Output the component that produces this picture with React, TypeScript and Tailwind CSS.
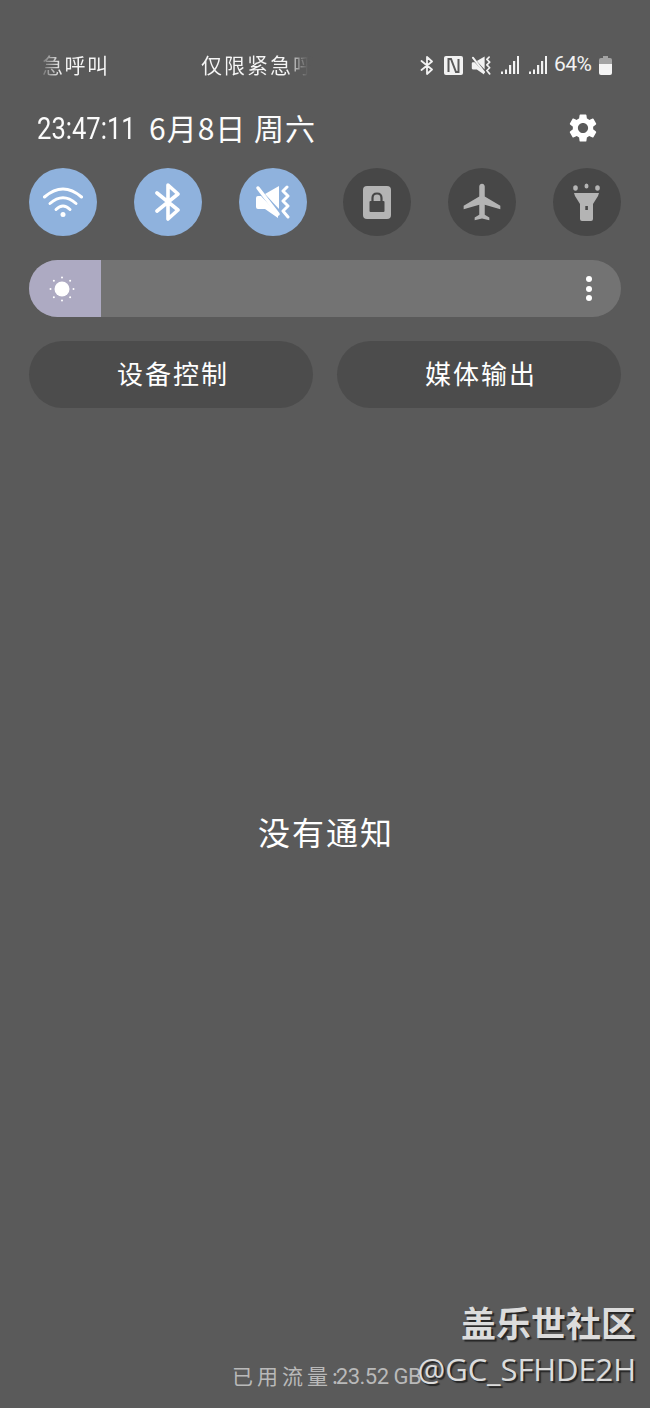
import { MdAirplanemodeActive, MdSettings } from 'react-icons/md';

const CJK = "font-['Noto_Sans_CJK_SC',sans-serif]";

function BluetoothIcon({ className }: { className: string }) {
  return (
    <svg viewBox="0 0 28 38" className={className} fill="none" stroke="currentColor" strokeWidth="3.6" strokeLinecap="round" strokeLinejoin="round">
      <path d="M3 10 24 27 14 36V2L24 11 3 28" />
    </svg>
  );
}

function MuteVibrateIcon({ className }: { className: string }) {
  return (
    <svg viewBox="0 0 35 34" className={className} fill="currentColor">
      <path d="M1 13Q1 11 3 11H6L23 29V33L10 24H3Q1 24 1 22Z" />
      <path d="M10 9 24 1V24Z" />
      <path d="M3 3 23 29" fill="none" stroke="currentColor" strokeWidth="3.500" strokeLinecap="round" />
      <path d="M32 2 28 6 33 11 28 16 33 21 28 26 33 32" fill="none" stroke="currentColor" strokeWidth="3" strokeLinecap="round" strokeLinejoin="round" />
    </svg>
  );
}

function SignalIcon() {
  return (
    <svg viewBox="0 0 18 18" className="h-[18px] w-[18px]" fill="currentColor">
      <rect x="0" y="15.500" width="2" height="2.500" />
      <rect x="4" y="13.500" width="2" height="4.500" />
      <rect x="8" y="9" width="2.200" height="9" />
      <rect x="12" y="5" width="2.200" height="13" />
      <rect x="16" y="0" width="2" height="18" />
    </svg>
  );
}

function NfcIcon() {
  return (
    <svg viewBox="0 0 19 19" className="h-[19px] w-[19px]">
      <rect width="19" height="19" rx="2" fill="#f2f2f2" />
      <path d="M4.500 16V3H7L12 16H14.500V3" fill="none" stroke="#5a5a5a" strokeWidth="2" />
    </svg>
  );
}

function BatteryIcon() {
  return (
    <svg viewBox="0 0 13 19" className="h-[19px] w-[13px]">
      <path d="M4 0H9V2H11Q13 2 13 4V8H0V4Q0 2 2 2H4Z" fill="#a3a3a3" />
      <path d="M0 8H13V17Q13 19 11 19H2Q0 19 0 17Z" fill="#f4f4f4" />
    </svg>
  );
}

function WifiIcon() {
  return (
    <svg viewBox="0 0 40 30" className="h-[30px] w-[40px]" fill="none" stroke="currentColor" strokeWidth="3" strokeLinecap="round">
      <path d="M1.500 10Q20-6 38.500 10" />
      <path d="M7 16.500Q20 5 33 16.500" />
      <path d="M13 22.500Q20 15.500 27 22.500" />
      <circle cx="20" cy="27.500" r="2.500" fill="currentColor" stroke="none" />
    </svg>
  );
}

function RotationLockIcon() {
  return (
    <svg viewBox="0 0 28 33" className="h-[33px] w-[28px]">
      <rect width="28" height="33" rx="4" fill="#b4b4b4" />
      <rect x="6.500" y="15" width="15" height="11" rx="1" fill="#474747" />
      <path d="M9.500 15.500V12Q9.500 7.500 14 7.500T18.500 12V15.500" fill="none" stroke="#474747" strokeWidth="2.200" />
    </svg>
  );
}

function FlashlightIcon() {
  return (
    <svg viewBox="0 0 27 39" className="h-[39px] w-[27px]" fill="#b4b4b4">
      <ellipse cx="2.500" cy="5" rx="2.300" ry="2.800" />
      <ellipse cx="13.500" cy="3" rx="2" ry="2.500" />
      <ellipse cx="24.500" cy="5" rx="2.300" ry="2.800" />
      <path d="M1 10H26L25 13 20 21V36Q20 38 18 38H9Q7 38 7 36V21L2 13Z" />
      <rect x="12.300" y="23" width="2.600" height="4" fill="#474747" />
    </svg>
  );
}

function SunIcon() {
  const rays = [0, 45, 90, 135, 180, 225, 270, 315];
  return (
    <svg viewBox="0 0 28 28" className="h-[28px] w-[28px]" fill="#ffffff">
      <circle cx="14" cy="14" r="7.500" />
      {rays.map((deg) => (
        <circle
          key={deg}
          cx={14 + 11.5 * Math.cos((deg * Math.PI) / 180)}
          cy={14 + 11.5 * Math.sin((deg * Math.PI) / 180)}
          r="1"
        />
      ))}
    </svg>
  );
}

export default function App() {
  return (
    <div className="flex h-[1408px] w-[650px] flex-col overflow-hidden bg-[#5a5a5a] text-white">
      {/* Status bar */}
      <div className="flex h-[26px] items-center mt-[52px] text-[#f2f2f2]">
        <span className={`${CJK} ml-[42px] w-[66px] -translate-y-px bg-linear-to-r from-[#777777] from-0% to-[#f5f5f5] to-30% bg-clip-text text-[21px] leading-[26px] tracking-[1.500px] text-transparent whitespace-nowrap`}>
          急呼叫
        </span>
        <span className={`${CJK} ml-[93px] w-[115px] -translate-y-px bg-linear-to-r from-[#f5f5f5] from-75% to-[#5a5a5a] to-93% bg-clip-text text-[21px] leading-[26px] tracking-[2px] text-transparent whitespace-nowrap`}>
          仅限紧急呼
        </span>
        <BluetoothIcon className="ml-[104px] h-[19px] w-[14px]" />
        <div className="ml-[10px]"><NfcIcon /></div>
        <MuteVibrateIcon className="ml-[8px] h-[19px] w-[20px]" />
        <div className="ml-[10px]"><SignalIcon /></div>
        <div className="ml-[10px]"><SignalIcon /></div>
        <span className="ml-[7px] w-[36px] -translate-y-px font-['Roboto',sans-serif] text-[21px] leading-[26px] tracking-[-0.500px] whitespace-nowrap">64%</span>
        <div className="ml-[9px]"><BatteryIcon /></div>
      </div>

      {/* Clock and settings */}
      <div className="mt-[32px] flex h-[36px] items-center justify-between pl-[37px] pr-[50px]">
        <div className="flex items-center whitespace-nowrap text-[#fbfbfb]">
          <span className="w-[112px] origin-left scale-x-[0.8] font-['Roboto',sans-serif] text-[32px] leading-[36px]">23:47:11</span>
          <span className={`${CJK} -translate-y-px text-[30px] leading-[36px] tracking-[1px]`}>6月8日 周六</span>
        </div>
        <MdSettings className="h-[34px] w-[34px] text-white" />
      </div>

      <div className="flex flex-col gap-[24px] px-[29px] mt-[22px]">
        {/* Quick toggles */}
        <div className="flex justify-between">
          <div className="flex h-[68px] w-[68px] items-center justify-center rounded-full bg-[#8fb2dd] text-white"><WifiIcon /></div>
          <div className="flex h-[68px] w-[68px] items-center justify-center rounded-full bg-[#8fb2dd] text-white"><BluetoothIcon className="h-[38px] w-[28px]" /></div>
          <div className="flex h-[68px] w-[68px] items-center justify-center rounded-full bg-[#8fb2dd] text-white"><MuteVibrateIcon className="h-[34px] w-[35px]" /></div>
          <div className="flex h-[68px] w-[68px] items-center justify-center rounded-full bg-[#474747]"><RotationLockIcon /></div>
          <div className="flex h-[68px] w-[68px] items-center justify-center rounded-full bg-[#474747] text-[#b4b4b4]"><MdAirplanemodeActive className="h-[44px] w-[44px]" /></div>
          <div className="flex h-[68px] w-[68px] items-center justify-center rounded-full bg-[#474747]"><FlashlightIcon /></div>
        </div>

        {/* Brightness slider */}
        <div className="flex h-[57px] items-center justify-between overflow-hidden rounded-full bg-[#737373] pr-[29px]">
          <div className="flex h-full w-[72px] items-center justify-center bg-[#adaac2] pr-[6px]"><SunIcon /></div>
          <div className="flex flex-col gap-[3.500px]">
            <span className="h-[6px] w-[6px] rounded-full bg-white" />
            <span className="h-[6px] w-[6px] rounded-full bg-white" />
            <span className="h-[6px] w-[6px] rounded-full bg-white" />
          </div>
        </div>

        {/* Shortcuts */}
        <div className="flex gap-[24px]">
          <button className={`${CJK} h-[67px] flex-1 rounded-full bg-[#4c4c4c] pb-[4px] pl-[4px] text-[26px] tracking-[2px] text-white`}>设备控制</button>
          <button className={`${CJK} h-[67px] flex-1 rounded-full bg-[#4c4c4c] pb-[4px] pl-[4px] text-[26px] tracking-[2px] text-white`}>媒体输出</button>
        </div>
      </div>

      {/* Empty notification list */}
      <p className={`${CJK} mt-[403px] pl-[2px] text-center text-[32px] leading-[40px] tracking-[2px] text-white`}>没有通知</p>

      {/* Data usage with community tag on top */}
      <div className="relative mt-auto h-[100px] w-full">
        <div className={`${CJK} absolute bottom-[15px] left-[232px] flex items-baseline whitespace-nowrap text-[21px] tracking-[4px] text-[#b9b9b9]`}>
          已用流量:
          <span className="ml-[-6px] font-['Roboto',sans-serif] text-[22px] tracking-[-0.500px]">23.52 GB</span>
        </div>
        <div className="absolute right-[14px] top-[-7px] flex flex-col items-end whitespace-nowrap text-[#dcdcdc] [text-shadow:2px_2px_1px_#262626]">
          <span className={`${CJK} text-[35px] font-bold leading-[42px]`}>盖乐世社区</span>
          <span className="mt-[5px] font-['Open_Sans',sans-serif] text-[31px] leading-[42px] tracking-[-0.100px]">@GC_SFHDE2H</span>
        </div>
      </div>
    </div>
  );
}
